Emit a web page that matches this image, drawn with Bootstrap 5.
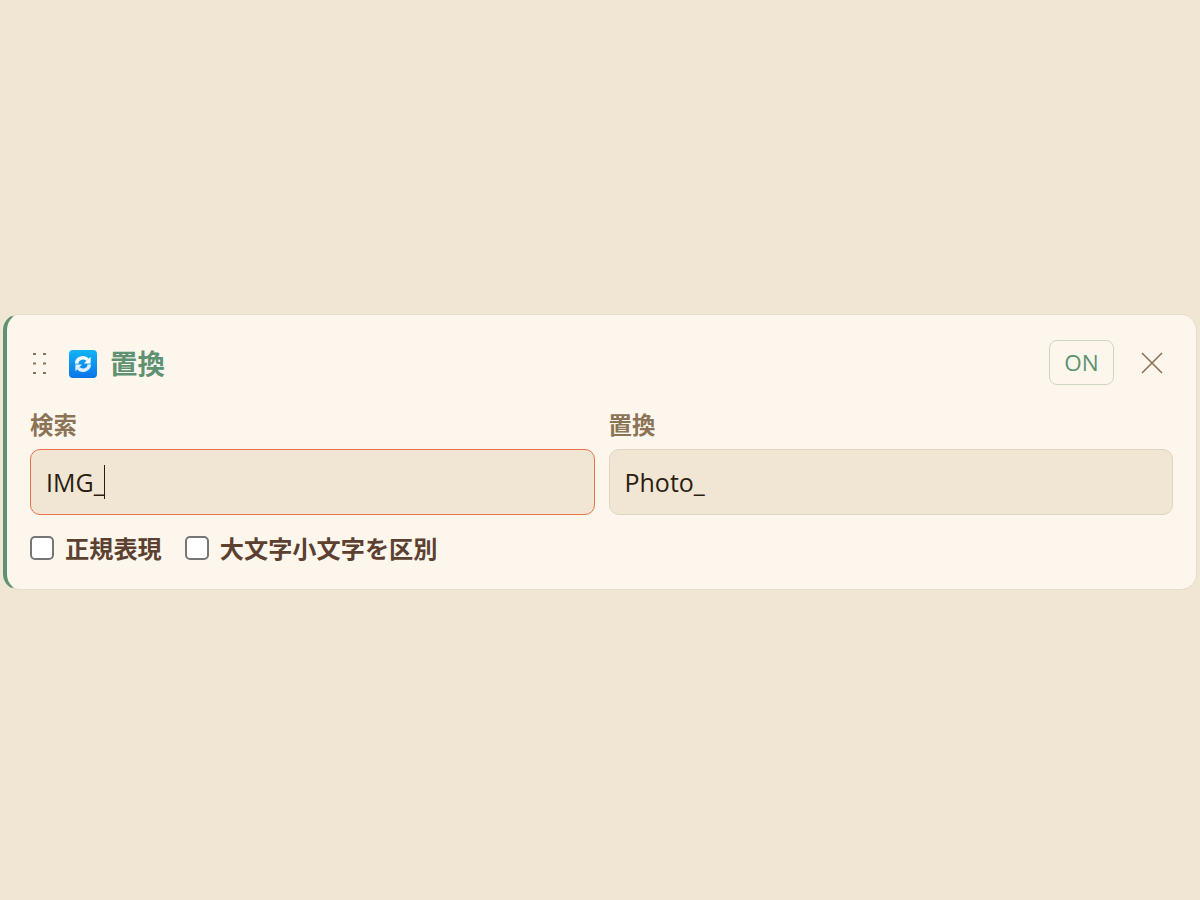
<!DOCTYPE html>
<html lang="ja">
<head>
<meta charset="utf-8">
<title>置換</title>
<link href="https://cdn.jsdelivr.net/npm/bootstrap@5.3.0/dist/css/bootstrap.min.css" rel="stylesheet">
<style>
html,body{height:100%}
body{background:#f0e6d3;font-family:"Open Sans","Noto Sans CJK JP",sans-serif;padding:314px 3px 0}
.rule-card{height:276px;background:#fdf6ec;border:1px solid #e5dccb;border-left:4px solid #5f9272;border-radius:16px;padding:18px 23px 0 23px}
.rule-head{height:62px}
.grip{width:16px;height:22px;margin-right:23px;color:#8b7355}
.rule-icon{width:28px;height:28px;margin-right:13px}
.rule-title{font-size:27.5px;font-weight:700;color:#5f9272;line-height:1.2;margin-bottom:2px}
.on-btn{width:65px;height:45px;border:1px solid #cfd6c0;border-radius:8px;color:#5f9272;font-size:22.5px;background:transparent;padding:0;margin:0 26px 3px 0}
.close-x{width:24px;height:24px;margin:0 9px 2px 0;background:none;border:0;padding:0}
.field-row{gap:14px}
.field-label{font-size:23.5px;font-weight:700;color:#8b7355;line-height:26px;margin:17px 0 11px;display:block}
.field-box{height:66px;background:#f0e6d3;border:1px solid #e0d4c0;border-radius:10px;font-size:25px;color:#2b1d12;padding:2px 15px 0;display:flex;align-items:center}
.field-box.is-active{border-color:#e8734a}
.caret-bar{display:inline-block;width:1px;height:34px;background:#2b1d12;margin:-2px 0 0 -1px}
.check-row{margin-top:20px;gap:23px}
.check-item{gap:11px;font-size:24.2px;font-weight:700;color:#5c4030;line-height:28px;margin:0}
.check-input{appearance:none;width:24px;height:24px;margin:-2px 0 0;background:#fff;border:2px solid #767676;border-radius:5px;flex:none}
</style>
</head>
<body>
<div class="rule-card">
  <div class="rule-head d-flex align-items-center">
    <svg class="grip" viewBox="0 0 16 22" fill="currentColor" aria-hidden="true">
      <rect x="3" y="0" width="3" height="2"/><rect x="13" y="0" width="3" height="2"/>
      <rect x="3" y="9.5" width="3" height="2"/><rect x="13" y="9.5" width="3" height="2"/>
      <rect x="3" y="19" width="3" height="2"/><rect x="13" y="19" width="3" height="2"/>
    </svg>
    <svg class="rule-icon" viewBox="0 0 28 28" aria-hidden="true">
      <defs><linearGradient id="bl" x1="0" y1="0" x2="0" y2="1"><stop offset="0" stop-color="#11b4f5"/><stop offset="1" stop-color="#0c74ea"/></linearGradient></defs>
      <rect width="28" height="28" rx="4" fill="url(#bl)"/>
      <g transform="translate(14 14) scale(.85) translate(-14 -14)">
        <path d="M6.5 13.5a7.5 7 0 0 1 13-4.5" fill="none" stroke="#fff" stroke-width="4"/>
        <path d="M21.5 14.5a7.5 7 0 0 1-13 4.5" fill="none" stroke="#dcefff" stroke-width="4"/>
        <path d="M23 5.5v8h-8z" fill="#fff"/>
        <path d="M5 22.5v-8h8z" fill="#dcefff"/>
      </g>
    </svg>
    <span class="rule-title">置換</span>
    <button type="button" class="on-btn ms-auto">ON</button>
    <button type="button" class="close-x d-flex" aria-label="閉じる">
      <svg width="24" height="24" viewBox="0 0 24 24" fill="none" stroke="#8b7355" stroke-width="1.6"><path d="M2 2L22 22M22 2L2 22"/></svg>
    </button>
  </div>
  <div class="d-flex field-row">
    <div class="flex-fill w-50">
      <label class="field-label">検索</label>
      <div class="field-box is-active">IMG_<span class="caret-bar"></span></div>
    </div>
    <div class="flex-fill w-50">
      <label class="field-label">置換</label>
      <div class="field-box">Photo_</div>
    </div>
  </div>
  <div class="d-flex check-row">
    <label class="check-item d-flex align-items-center"><input type="checkbox" class="check-input">正規表現</label>
    <label class="check-item d-flex align-items-center"><input type="checkbox" class="check-input">大文字小文字を区別</label>
  </div>
</div>
<script src="https://cdn.jsdelivr.net/npm/bootstrap@5.3.0/dist/js/bootstrap.bundle.min.js"></script>
</body>
</html>
